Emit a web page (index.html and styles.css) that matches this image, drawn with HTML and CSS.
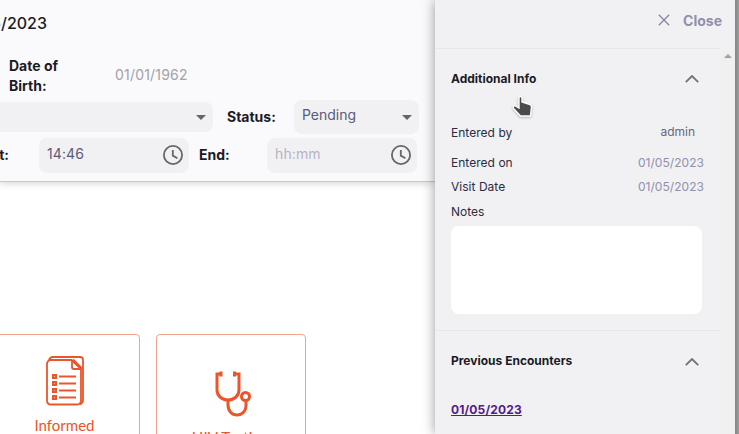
FILE: index.html
```html
<!DOCTYPE html>
<html lang="en">
<head>
<meta charset="utf-8">
<title>Encounter</title>
<link rel="stylesheet" href="styles.css">
</head>
<body>
<div class="app">
  <main class="main">
    <header class="summary">
      <h1 class="title"><span>01/05/2023</span></h1>
      <div class="row birth">
        <span class="label birth-label">Date of Birth:</span>
        <span class="birth-value">01/01/1962</span>
      </div>
      <div class="row selects">
        <div class="field program"><i class="caret"></i></div>
        <span class="label status-label">Status:</span>
        <div class="field status"><span>Pending</span><i class="caret"></i></div>
      </div>
      <div class="row times">
        <span class="label start-label"><span>Start:</span></span>
        <div class="field time"><span>14:46</span>
          <svg class="clock" viewBox="0 0 20 20"><circle cx="10" cy="10" r="9.1"/><path d="M9.8 5v5.6l4.6 2.6"/></svg>
        </div>
        <span class="label end-label">End:</span>
        <div class="field time"><span class="placeholder">hh:mm</span>
          <svg class="clock" viewBox="0 0 20 20"><circle cx="10" cy="10" r="9.1"/><path d="M9.8 5v5.6l4.6 2.6"/></svg>
        </div>
      </div>
    </header>
    <section class="cards">
      <div class="card">
        <svg class="icon-form" viewBox="0 0 38 50" width="38" height="50">
          <path class="s" d="M4 4h21.500L35 13v31.500q0 4-4 4H5q-4 0-4-4V8q0-3 3-4z"/>
          <path class="s" d="M3 4Q4 1 7 1h27q3 0 3 3v40q0 3-3 4.500"/>
          <path class="s" d="M26 4v7q0 2 2 2h7"/>
          <path class="s" d="M27 3.500l9 9"/>
          <path class="bullets" d="M6 18h5v5H6zM6 25h5v5H6zM6 32h5v5H6zM6 39h5v5H6z"/>
          <path class="holes" d="M8 20h1v1H8zM8 27h1v1H8zM8 34h1v1H8zM8 41h1v1H8z"/>
          <path class="s" d="M13 20.500h17M13 27.500h17M13 34.500h17M13 41.500h17"/>
        </svg>
        <span class="card-label">Informed Consent</span>
      </div>
      <div class="card">
        <svg class="icon-steth" viewBox="0 0 36 46" width="36" height="46">
          <path d="M6 3H2v16c0 6 5 10 11 10s11-4 11-10V3h-4"/>
          <path d="M6 .5v5M19.500 .5v5"/>
          <path d="M13 29v5c0 6 4 10 9 10s9-4 9-9v-5"/>
          <circle cx="30.500" cy="25.500" r="4"/>
        </svg>
        <span class="card-label wide">HIV Testing</span>
      </div>
    </section>
  </main>
  <aside class="panel">
    <div class="close-bar">
      <svg width="12" height="12" viewBox="0 0 12 12"><path d="M.8.800l10.400 10.400M11.200.8.800 11.200"/></svg>
      <span>Close</span>
    </div>
    <div class="panel-body">
      <div class="content">
        <section class="info">
          <div class="section-head"><h2>Additional Info</h2>
            <svg class="chevron" viewBox="0 0 14 8"><path d="M.8 7.200 7 1l6.200 6.200"/></svg>
          </div>
          <dl>
            <div class="pair by"><dt>Entered by</dt><dd>admin</dd></div>
            <div class="pair"><dt>Entered on</dt><dd>01/05/2023</dd></div>
            <div class="pair"><dt>Visit Date</dt><dd>01/05/2023</dd></div>
          </dl>
          <label class="notes-label" for="notes">Notes</label>
          <textarea class="notes" id="notes"></textarea>
        </section>
        <section class="previous">
          <div class="section-head"><h2>Previous Encounters</h2>
            <svg class="chevron" viewBox="0 0 14 8"><path d="M.8 7.200 7 1l6.200 6.200"/></svg>
          </div>
          <a class="visit" href="#">01/05/2023</a>
        </section>
      </div>
      <div class="scrollbar"><i></i></div>
    </div>
  </aside>
  <div class="edge"></div>
  <svg class="pointer" viewBox="0 0 22 24"><path d="M7 2.500Q8.500.5 10 2.500V7l8 2.500q1.500.5 1.500 2.500l-1 9H8.500L2 14q-2-2.500.5-3.500L7 13z"/></svg>
</div>
</body>
</html>
```

FILE: styles.css
```css
* { box-sizing: border-box; }
body { margin: 0; font-family: Inter, "Liberation Sans", sans-serif; color: #1a1b25; }
.app { position: relative; display: flex; width: 739px; height: 434px; overflow: hidden; background: #fff; }
.main { width: 435px; flex: none; }
.summary { height: 182px; background: #fafafc; border-bottom: 1px solid #c6c8d0; box-shadow: 0 2px 7px rgba(0,0,0,.15); }
.title { margin: 0; width: 47px; height: 55px; padding-top: 13px; font-size: 16px; line-height: 20px; font-weight: 500; display: flex; justify-content: flex-end; white-space: nowrap; }
.row { display: flex; align-items: center; }
.label { font-size: 14px; font-weight: 700; line-height: 20px; flex: none; }
.birth { height: 42px; padding-left: 9px; }
.birth-label { width: 74px; }
.birth-value { margin: -4px 0 0 32px; font-size: 14px; font-weight: 400; letter-spacing: .2px; color: #a2a2a8; }
.selects { height: 40px; }
.field { display: flex; align-items: center; justify-content: space-between; background: #f1f1f4; border-radius: 8px; font-size: 14px; line-height: 18px; color: #5a5b78; }
.caret { border: 5px solid transparent; border-top-color: #666; border-bottom: 0; }
.program { width: 213px; height: 30px; justify-content: flex-end; padding-right: 7px; border-radius: 0 8px 8px 0; }
.status-label { width: 67px; margin-left: 14px; }
.status { width: 125px; height: 34px; padding: 0 7px 0 8px; }
.status span { margin-top: -5px; }
.times { height: 37px; }
.times .label { margin-top: -2px; }
.start-label { width: 9px; margin-right: 30px; display: flex; justify-content: flex-end; }
.time { width: 150px; height: 35px; padding: 0 6px 0 8px; }
.time span { margin-top: -3px; letter-spacing: .1px; }
.placeholder { color: #b4b4c2; }
.clock { width: 20px; height: 20px; margin-top: -2px; fill: none; stroke: #666; stroke-width: 1.8; }
.end-label { width: 68px; margin-left: 10px; }
.cards { display: flex; gap: 16px; margin: 152px 0 0 -10px; }
.card { width: 150px; height: 150px; flex: none; border: 1px solid #f2a48c; border-radius: 4px; display: flex; flex-direction: column; align-items: center; color: #e9562b; }
.icon-form { margin: 21px 0 9px; }
.card-label { width: 84px; margin-right: 1px; text-align: center; font: 15px/20px Lato, sans-serif; }
.card-label.wide { letter-spacing: .2px; }
.icon-form .s { fill: none; stroke: #e9562b; stroke-width: 1.8; }
.bullets { fill: #e9562b; }
.holes { fill: #f5b49f; }
.icon-steth { margin: 36px 0 10px 4px; fill: none; stroke: #e9562b; stroke-width: 3; }
.panel { position: relative; width: 300px; height: 434px; flex: none; background: #f1f1f4; box-shadow: 0 0 12px rgba(0,0,0,.4); display: flex; flex-direction: column; }
.close-bar { height: 48px; flex: none; display: flex; align-items: center; justify-content: flex-end; gap: 13px; padding: 0 13px 8px 0; color: #9090ab; font-size: 14px; font-weight: 700; }
.close-bar svg { fill: none; stroke: #85869f; stroke-width: 1.3; }
.panel-body { display: flex; flex: 1; min-height: 0; }
.content { width: 285px; overflow: hidden; }
.scrollbar { width: 15px; background: #f0f0f0; display: flex; justify-content: center; padding-top: 6px; }
.scrollbar i { width: 0; height: 0; border: 4px solid transparent; border-bottom-color: #a0a0a0; border-top: 0; }
.info, .previous { border-top: 1px solid #e7e7ea; padding: 0 16px; }
.info { height: 282px; }
.section-head { height: 60px; display: flex; align-items: center; justify-content: space-between; padding-right: 5px; }
h2 { margin: 0; font-size: 12px; font-weight: 700; line-height: 16px; }
.chevron { width: 14px; height: 8px; fill: none; stroke: #737373; stroke-width: 1.8; }
.previous .chevron { margin-top: 2px; }
dl { margin: 12px 0 0; font-size: 12px; line-height: 24px; }
.pair { display: flex; justify-content: space-between; height: 24px; }
.by { height: 30px; }
dt { color: #2c2c3f; letter-spacing: .03px; }
dd { margin: 0; color: #8f90aa; letter-spacing: .05px; }
.by dd { color: #66677f; margin: -1px 9px 0 0; letter-spacing: 0; }
.notes-label { display: block; margin-top: 1px; font-size: 12px; line-height: 24px; color: #2c2c3f; }
.notes { display: block; width: 251px; height: 88px; margin: 2px 0 0; border: 0; border-radius: 8px; background: #fff; resize: none; }
.visit { display: inline-block; margin-top: 10px; font-size: 12px; line-height: 18px; font-weight: 700; letter-spacing: .15px; color: #551a8b; }
.edge { width: 4px; flex: none; position: relative; background: linear-gradient(90deg, #858585, #9d9d9d); }
.pointer { position: absolute; left: 512px; top: 95px; width: 22px; height: 24px; fill: #4b4b4b; stroke: #fff; stroke-width: 1.4; filter: drop-shadow(0 1px 1px rgba(0,0,0,.25)); }
```
